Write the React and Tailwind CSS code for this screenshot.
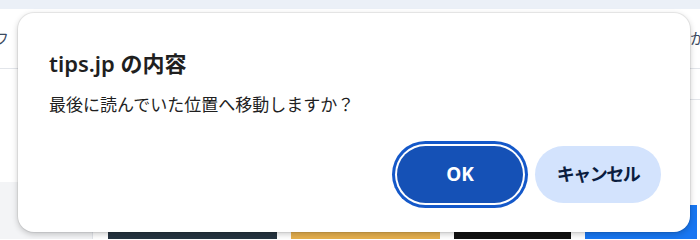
const jp = { fontFamily: '"Noto Sans", "Noto Sans CJK JP", sans-serif' };

function PageBehind() {
  return (
    <div className="flex flex-col h-full">
      <div className="h-[9px] shrink-0 bg-[#ebf0f7]" />
      <div className="h-[60px] shrink-0 flex items-center justify-between border-b border-[#e2e5ea] text-[15px] text-[#3b4a60]">
        <span className="-ml-[6px]">フ</span>
        <span className="-mr-[5px]">か</span>
      </div>
      <div className="h-[31px] shrink-0 flex justify-end">
        <div className="w-[12px] border-b border-[#e2e5ea]" />
      </div>
      <div className="h-[82px] shrink-0" />
      <div className="flex-1 min-h-0 overflow-hidden flex items-start">
        <div className="w-[93px] h-full bg-[#f3f4f6] border-r border-[#e2e5ea]" />
        <div className="ml-[15px] mt-[23px] flex gap-[14px] text-white text-[15px] font-bold">
          <div className="w-[169px] h-[70px] bg-[#263440] flex items-center justify-center pt-[40px]">レビューを書く</div>
          <div className="w-[149px] h-[70px] bg-[#e6b04e] flex items-center justify-center pt-[40px]">ブックを作成</div>
          <div className="w-[117px] h-[70px] bg-[#111] flex items-center justify-center pt-[40px]">𝕏 シェア</div>
          <div className="w-[112px] h-[70px] bg-[#1877f2] flex items-center justify-center pt-[40px]">f シェア</div>
        </div>
      </div>
    </div>
  );
}

export default function App() {
  return (
    <div className="relative w-[700px] h-[239px] overflow-hidden bg-white" style={jp}>
      <PageBehind />

      {/* confirm dialog */}
      <div className="absolute left-[18px] top-[13px] w-[672px] h-[219px] bg-white rounded-[16px] shadow-[0_0_0_1px_rgba(0,0,0,0.06),0_2px_6px_rgba(0,0,0,0.22)] pl-[31px] pr-[29px] pt-[35px] pb-[29px] flex flex-col">
        <h1 className="text-[22px] leading-[30px] font-semibold text-[#1f1f1f]">tips.jp の内容</h1>
        <p className="mt-[15px] text-[17px] leading-[24px] text-[#1f1f1f]">最後に読んでいた位置へ移動しますか？</p>
        <div className="mt-auto flex justify-end gap-[12px]">
          <button className="w-[126px] h-[57px] rounded-full bg-[#1551b6] text-white text-[19px] font-bold shadow-[0_0_0_2px_#fff,0_0_0_5px_#1458c9]">
            OK
          </button>
          <button className="w-[126px] h-[57px] rounded-full bg-[#d3e3fd] text-[#0b1d3f] text-[18px] tracking-[-1.5px] font-bold">
            キャンセル
          </button>
        </div>
      </div>
    </div>
  );
}
